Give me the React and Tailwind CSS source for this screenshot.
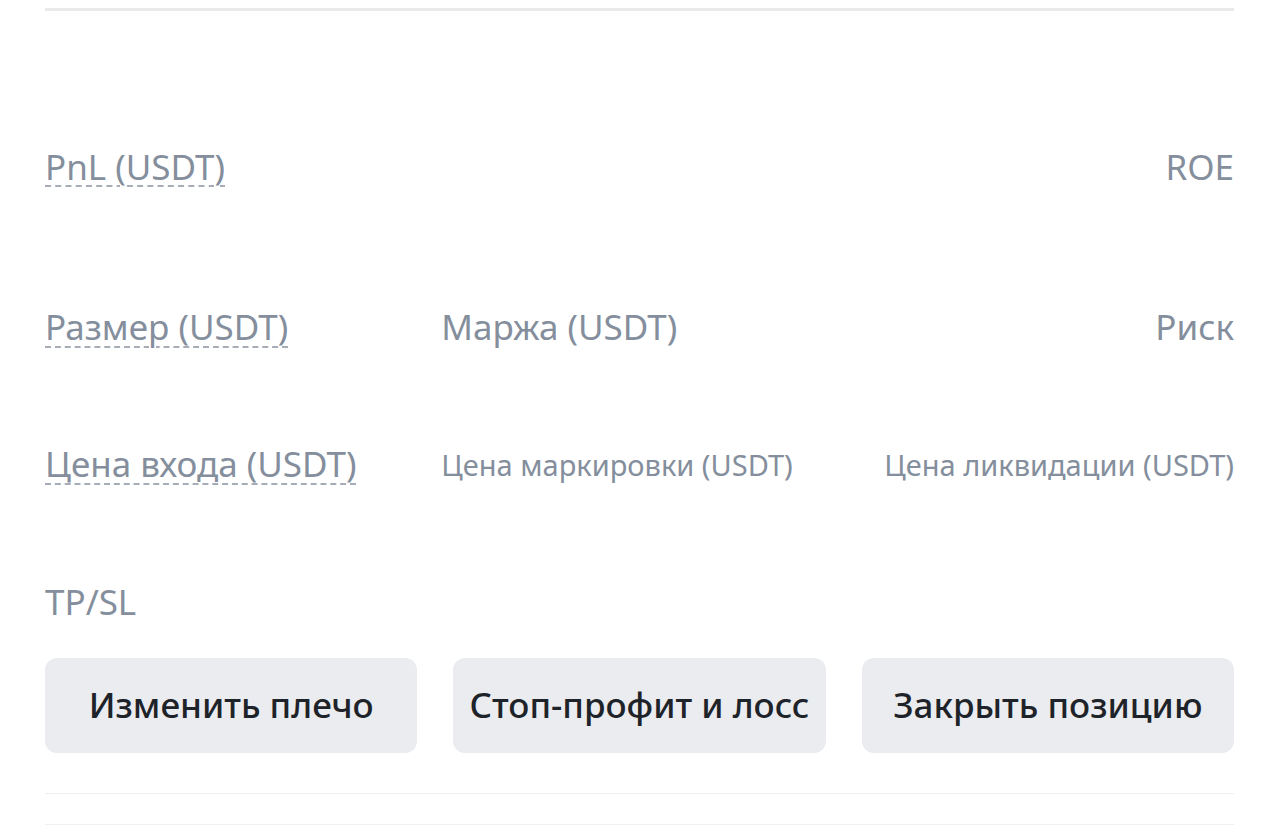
import React from 'react';

const font = "font-['Noto_Sans','Liberation_Sans',sans-serif]";

const Dashed = ({ children }) => (
  <span className="underline decoration-dashed decoration-[#a7adb7] decoration-2 underline-offset-[6px]">
    {children}
  </span>
);

const App = () => {
  return (
    <div className={`min-h-screen bg-white pl-[45px] pr-[46px] pt-2 ${font}`}>
      {/* top divider */}
      <div className="h-[3px] bg-[#e9eaec]" />

      {/* PnL / ROE */}
      <div className="mt-[136px] flex h-10 items-center justify-between text-[35px] text-[#848e9c]">
        <Dashed>PnL (USDT)</Dashed>
        <span>ROE</span>
      </div>

      {/* Size / Margin / Risk */}
      <div className="mt-[114px] grid h-10 grid-cols-3 items-center text-[35px] text-[#848e9c]">
        <div>
          <Dashed>Размер (USDT)</Dashed>
        </div>
        <div>Маржа (USDT)</div>
        <div className="text-right">Риск</div>
      </div>

      {/* Prices */}
      <div className="mt-[97px] grid h-10 grid-cols-3 items-center text-[#848e9c]">
        <div className="whitespace-nowrap text-[35px]">
          <Dashed>Цена входа (USDT)</Dashed>
        </div>
        <div className="whitespace-nowrap text-[29px]">Цена маркировки (USDT)</div>
        <div className="whitespace-nowrap text-right text-[29px]">Цена ликвидации (USDT)</div>
      </div>

      {/* TP/SL */}
      <div className="mt-[104px] flex h-10 items-center text-[35px] text-[#848e9c]">TP/SL</div>

      {/* Actions */}
      <div className="mt-[36px] grid grid-cols-3 gap-9">
        {['Изменить плечо', 'Стоп-профит и лосс', 'Закрыть позицию'].map((label) => (
          <button
            key={label}
            className="flex h-[95px] items-center justify-center whitespace-nowrap rounded-xl bg-[#eaecef] text-[35px] font-medium text-[#1e2329]"
          >
            {label}
          </button>
        ))}
      </div>

      <div className="mt-10 h-px bg-[#eeeff1]" />
      <div className="mt-[30px] h-px bg-[#eeeff1]" />
    </div>
  );
};

export default App;
